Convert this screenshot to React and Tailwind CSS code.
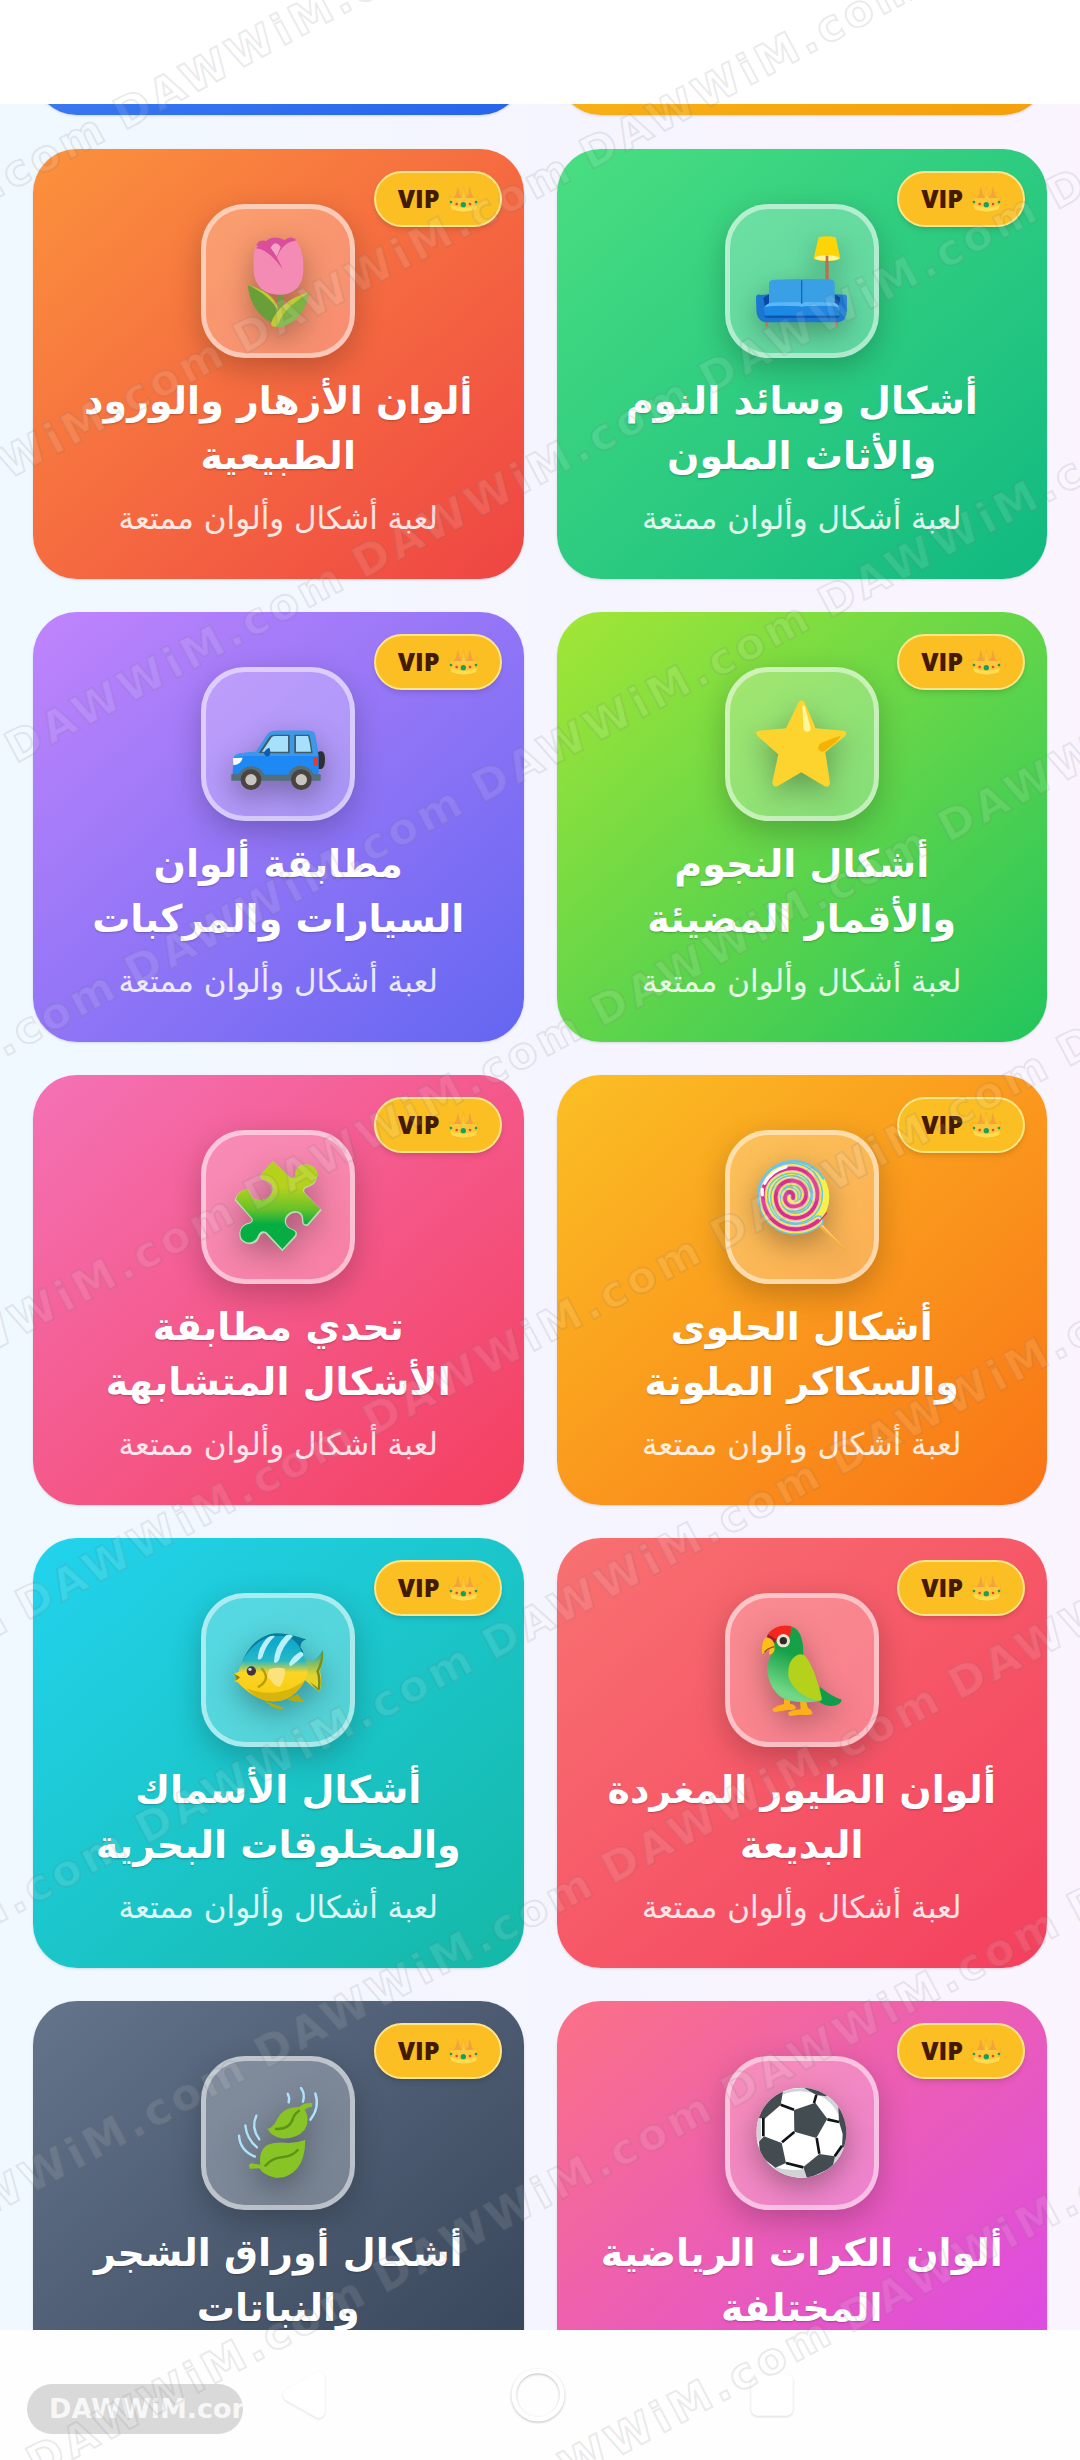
import React from 'react';
import { Circle, Square, Triangle } from 'lucide-react';

const Tulip = () => (
  <svg viewBox="159 165 270 270" className="size-[90px] overflow-visible" aria-hidden="true">
    <path d="M294 340 H312 L310 400 H296 Z" fill="#689f38" />
    <path d="M203 312 C250 325 292 350 294 395 L286 430 C232 408 210 365 203 312 Z" fill="#689f38" />
    <path d="M203 312 C250 325 292 350 294 388 C270 350 240 328 203 312 Z" fill="#c0ca33" />
    <path d="M387 334 C382 378 350 436 290 440 C284 432 296 400 310 385 C330 365 360 342 387 334 Z" fill="#7cb342" />
    <path d="M387 334 C345 345 290 375 273 428 C276 440 290 440 293 433 C310 385 345 365 387 334 Z" fill="#c0ca33" />
    <path d="M228 215 C224 185 240 174 258 180 C275 165 298 168 314 178 C330 164 348 168 347 190 C350 215 300 240 290 240 C260 240 232 235 228 215 Z" fill="#d94f9b" />
    <path d="M272 200 Q287 175 302 198 L290 228 Z" fill="#f6a3c8" />
    <path d="M227 195 C250 192 274 206 290 232 C300 200 325 180 346 178 C360 190 372 225 370 260 C372 310 345 342 297 341 C245 341 218 305 221 255 C220 225 223 205 227 195 Z" fill="#f48bb5" />
    <path d="M240 187 C265 190 285 210 308 265 C290 240 262 205 228 202 Z" fill="#d94f9b" />
    <path d="M346 172 C320 180 300 200 289 229 C300 200 315 182 346 180 Z" fill="#d94f9b" />
  </svg>
);

const Couch = () => (
  <svg viewBox="111 165 270 270" className="size-[90px] overflow-visible" aria-hidden="true">
    <path d="M316 228 H326 V300 H316 Z" fill="#b8704f" />
    <path d="M296 169 Q321 162 347 169 L361 232 Q356 240 321 240 Q286 240 281 232 Z" fill="#fdd406" />
    <ellipse cx="321" cy="231" rx="36" ry="8" fill="#fff59d" />
    <path d="M317 224 H325 V242 H317 Z" fill="#b8704f" />
    <path d="M134 418 H148 L142 437 H137 Z M341 418 H355 L351 437 H346 Z" fill="#c0745a" />
    <path d="M108 348 Q110 338 122 342 L147 340 V380 L134 402 H358 L344 380 V340 L370 341 Q381 338 381 352 V385 Q380 422 355 424 H135 Q109 420 109 385 Z" fill="#1976d2" />
    <path d="M130 350 L147 340 V370 L135 378 Z M361 350 L344 340 V370 L356 378 Z" fill="#0d47a1" />
    <path d="M147 306 Q150 295 165 296 L238 294 Q245 296 252 294 L330 295 Q343 296 344 308 V380 H147 Z" fill="#39a0e5" />
    <path d="M243 298 H247 V370 H243 Z" fill="#1565c0" />
    <path d="M131 380 Q142 362 170 364 L240 363 L246 370 L252 363 L330 364 Q352 362 359 380 L354 403 H136 Z" fill="#1e88e5" />
    <path d="M134 378 Q145 362 170 364 L240 363 L246 370 L252 363 L330 364 Q350 364 357 378 Q330 372 250 376 L246 378 L240 376 Q170 372 134 378 Z" fill="#5cb8f5" />
    <path d="M132 404 H358 Q356 411 346 411 H145 Q134 411 132 404 Z" fill="#0d57b0" />
  </svg>
);

const Car = () => (
  <svg viewBox="159 174 270 270" className="size-[90px] overflow-visible" aria-hidden="true">
    <path d="M412 338 Q414 330 424 331 Q435 332 435 355 Q435 382 424 384 H412 Z" fill="#2f2f33" />
    <path d="M160 352 Q164 337 190 336 L228 332 L262 281 Q270 269 290 269 H385 Q403 269 405 280 L416 345 V402 H158 Z" fill="#1e88f5" />
    <path d="M228 332 L262 281 Q270 269 290 269 H385 Q403 269 405 280 L414 345 H190 Q170 345 162 350 Q166 337 190 336 Z" fill="#3c98e8" />
    <path d="M236 336 L268 288 Q273 281 284 281 H329 V337 Z" fill="#455a64" />
    <path d="M343 281 H388 Q393 300 398 337 H343 Z" fill="#455a64" />
    <path d="M246 332 L275 289 Q279 285 286 285 H324 V332 Z M348 285 H384 Q390 305 393 332 H348 Z" fill="#a6e0fa" />
    <path d="M252 338 Q254 324 268 320 Q274 334 268 345 Q258 350 252 338 Z" fill="#1259b0" />
    <path d="M159 351 L188 350 Q184 370 160 373 Z" fill="#fafafa" />
    <path d="M400 348 H414 V374 H400 Z" fill="#e53935" />
    <path d="M154 400 L176 398 Q190 376 214 376 Q244 378 253 401 H325 Q334 374 364 374 Q392 376 401 400 H422 V419 H154 Z" fill="#546e7a" />
    <circle cx="213" cy="416" r="31" fill="#4a4340" />
    <circle cx="213" cy="416" r="17" fill="#c9c5c2" />
    <circle cx="364" cy="416" r="31" fill="#4a4340" />
    <circle cx="364" cy="416" r="17" fill="#c9c5c2" />
  </svg>
);

const Star = () => (
  <svg viewBox="111 174 270 270" className="size-[90px] overflow-visible" aria-hidden="true">
    <path d="M236 184 Q245 172 254 184 L287 262 L371 269 Q386 273 375 285 L316 334 L330 425 Q328 441 314 436 L244 394 L172 436 Q158 440 157 424 L175 340 L112 284 Q102 272 117 269 L198 262 Z" fill="#fdd42e" />
    <path d="M247 194 Q252 190 256 200 L272 262 Q272 273 260 272 Q250 271 250 258 Z" fill="#fff79a" />
    <path d="M362 284 Q360 296 312 331 Q300 335 295 324 Q292 312 305 305 Q345 288 362 284 Z" fill="#f6b107" />
  </svg>
);

const Puzzle = () => (
  <svg viewBox="159 156 270 270" className="size-[90px] overflow-visible" aria-hidden="true">
    <defs>
      <linearGradient id="puzzle" x1="0" y1="0" x2="0" y2="1">
        <stop offset="0.3" stopColor="#b5d11c" />
        <stop offset="0.55" stopColor="#67c12a" />
        <stop offset="0.72" stopColor="#05ad43" />
      </linearGradient>
    </defs>
    <path d="M279 154 L331 203 C343 208 347 198 347 188 C348 166 375 157 396 168 C420 182 417 216 392 228 C380 233 367 237 375 249 L425 301 L384 347 C374 350 365 344 366 331 C366 307 345 303 329 315 C311 329 317 350 335 356 C351 361 355 371 347 382 L307 424 L257 371 C246 366 241 374 237 385 C227 409 193 407 181 388 C172 365 184 342 207 338 C215 336 218 330 212 324 L164 271 C170 252 187 234 204 239 C212 244 211 259 223 266 C240 276 268 268 277 246 C284 225 269 214 252 209 C240 207 239 198 246 190 Z" fill="#b9dcb4" />
    <path d="M279 154 L331 203 C343 208 347 198 347 188 C348 166 375 157 396 168 C418 180 417 212 392 224 C380 229 363 234 371 247 L421 297 L382 342 C374 345 369 340 370 329 C370 302 345 297 327 309 C307 323 311 350 333 358 C348 363 349 371 343 378 L307 417 L260 367 C247 360 238 366 233 379 C223 403 195 402 184 384 C176 363 187 345 208 341 C218 338 222 330 216 324 L168 268 C172 252 187 234 204 239 C212 244 211 259 223 266 C240 276 268 268 277 246 C284 225 269 214 252 209 C240 207 239 198 246 190 Z" fill="url(#puzzle)" />
  </svg>
);

const swirl = 'M219 264 C224 250 208 239 199 252 C188 270 202 291 225 289 C254 287 267 256 252 232 C236 207 199 205 179 228 C158 253 166 296 194 315 C230 337 276 318 289 277 C300 239 282 196 247 181 C202 163 148 188 132 230 C120 272 138 322 176 344 C212 366 262 360 294 333';

const Lollipop = () => (
  <svg viewBox="111 156 270 270" className="size-[90px] overflow-visible" aria-hidden="true">
    <path d="M288 342 L298 334 L378 420 Q376 426 370 422 Z" fill="#f3ab3c" />
    <path d="M294 338 L298 334 L378 420 Z" fill="#ffd07c" />
    <circle cx="220" cy="260" r="108" fill="#f7f04c" />
    <g fill="none" strokeLinecap="round">
      <path d={swirl} stroke="#6cc5e6" strokeWidth="34" />
      <path d={swirl} stroke="#f7f04c" strokeWidth="25" />
      <path d={swirl} stroke="#fbb2c4" strokeWidth="17" />
      <path d="M219 264 C224 250 208 239 199 252" stroke="#6cc5e6" strokeWidth="12" />
      <path d={swirl} stroke="#d92f8a" strokeWidth="11" />
      <path d="M118 285 A106 106 0 0 1 225 154 A106 106 0 0 1 310 205" stroke="#6cc5e6" strokeWidth="8" />
      <path d="M134 220 Q153 183 198 171 M127 237 V255" stroke="#ffffff" strokeWidth="9" />
      <path d="M300 332 L320 309" stroke="#d92f8a" strokeWidth="4" />
    </g>
  </svg>
);

const Fish = () => (
  <svg viewBox="159 165 270 270" className="size-[90px] overflow-visible" aria-hidden="true">
    <defs>
      <linearGradient id="fish" x1="0" y1="0" x2="0" y2="1">
        <stop offset="0.1" stopColor="#10a9cc" />
        <stop offset="0.38" stopColor="#25b8c6" />
        <stop offset="0.56" stopColor="#fbd524" />
        <stop offset="1" stopColor="#f6c90e" />
      </linearGradient>
      <linearGradient id="tail" x1="0" y1="0" x2="0" y2="1">
        <stop offset="0" stopColor="#12a3ad" />
        <stop offset="0.6" stopColor="#e4d32d" />
      </linearGradient>
    </defs>
    <path d="M248 388 Q275 402 314 414 Q300 422 275 410 Z M322 388 L352 372 Q362 388 375 395 Q350 400 322 388 Z" fill="#b5aa10" />
    <path d="M185 285 C198 235 240 192 290 190 C330 190 355 203 379 208 Q362 213 361 232 Q375 245 368 262 Z" fill="#087c9b" />
    <path d="M362 258 L392 277 Q415 265 428 240 Q434 268 420 302 Q428 335 419 365 Q395 350 372 328 Z" fill="url(#tail)" />
    <path d="M427 242 Q434 268 417 304 Q426 335 418 364 Q402 352 390 336 Q410 350 413 355 Q417 325 409 304 Q423 275 427 242 Z" fill="#7e8d13" />
    <path d="M176 305 C190 250 232 208 275 200 C315 193 345 202 360 235 C372 262 386 282 382 312 C370 355 330 392 285 394 C235 395 195 360 172 336 L162 334 Q172 326 168 320 L159 313 Z" fill="url(#fish)" />
    <path d="M200 355 C255 378 320 372 373 332 C350 375 320 394 280 394 C245 394 218 378 200 355 Z" fill="#d8b50d" />
    <path d="M262 203 Q272 196 285 198 Q257 225 247 262 Q240 272 233 267 Q235 230 262 203 Z M318 196 Q330 192 339 198 Q305 230 297 270 Q288 284 282 276 Q283 230 318 196 Z M360 246 Q372 246 370 256 Q350 278 333 288 Q326 290 328 280 Q335 260 360 246 Z" fill="#b9f0fa" />
    <path d="M246 296 Q274 328 236 350" fill="none" stroke="#b59c08" strokeWidth="7" strokeLinecap="round" />
    <path d="M268 298 Q290 290 314 296 Q318 322 300 350 Q286 350 278 338 L262 318 Z" fill="#fbe27c" />
    <path d="M159 310 Q174 318 180 322 Q176 328 163 334 Q172 325 168 320 Z" fill="#8b7a12" />
    <circle cx="214" cy="303" r="14" fill="#45343c" />
    <circle cx="210" cy="298" r="5" fill="#d7d7e0" />
  </svg>
);

const Parrot = () => (
  <svg viewBox="111 165 270 270" className="size-[90px] overflow-visible" aria-hidden="true">
    <defs>
      <linearGradient id="parrot" x1="0.7" y1="0" x2="0.4" y2="1">
        <stop offset="0.4" stopColor="#16a148" />
        <stop offset="0.9" stopColor="#72d885" />
      </linearGradient>
    </defs>
    <path d="M300 350 Q335 380 366 389 Q360 408 330 408 Q310 406 294 392 Z" fill="#0f9d4c" />
    <path d="M192 388 H210 V402 Q224 402 228 414 Q224 422 208 419 L166 426 Q156 424 158 416 Q172 405 192 402 Z M240 394 H258 L264 414 Q278 420 277 432 Q272 436 240 434 L210 438 Q202 434 206 426 Q222 418 242 418 Z" fill="#fbb117" />
    <path d="M160 182 Q205 155 232 180 Q253 205 249 255 L304 392 Q250 402 200 390 Q150 370 141 300 Q142 270 160 245 Z" fill="url(#parrot)" />
    <path d="M232 255 Q245 250 256 258 Q285 295 306 388 Q300 396 275 388 Q220 365 205 320 Q202 270 232 255 Z" fill="#b4d11c" />
    <path d="M145 190 Q170 160 214 168 L210 205 Q190 195 166 214 Z" fill="#f4261d" />
    <path d="M144 191 L168 208 L166 220 L140 203 Z" fill="#a11a35" />
    <path d="M126 252 Q124 210 139 202 Q162 205 164 230 Q165 252 148 254 Q146 244 150 238 Z" fill="#fdbf17" />
    <path d="M134 247 Q140 236 163 230" fill="none" stroke="#8a4a22" strokeWidth="4" />
    <circle cx="190" cy="212" r="20" fill="#eee6d2" />
    <circle cx="190" cy="212" r="11" fill="#2f2a26" />
  </svg>
);

const Leaves = () => (
  <svg viewBox="159 147 270 270" className="size-[90px] overflow-visible" aria-hidden="true">
    <g fill="none" stroke="#afe3fa" strokeWidth="7" strokeLinecap="round">
      <path d="M323 164 Q330 176 326 190 M363 147 Q376 165 369 188 M406 163 Q420 205 391 242" />
      <path d="M229 230 Q212 265 238 301 M196 259 Q200 300 231 325 M177 290 Q180 335 225 353" />
    </g>
    <path d="M262 270 Q280 266 292 240 Q310 203 358 204 Q372 190 397 192 L396 204 Q382 203 374 212 Q392 240 374 272 Q350 300 305 298 Q278 295 262 270 Z" fill="#88c425" />
    <path d="M208 376 L214 373 L241 377 Q235 340 258 320 Q285 307 325 312 Q352 312 376 303 Q375 360 352 388 Q325 420 286 416 Q252 410 238 388 L210 389 Q205 382 208 376 Z" fill="#88c425" />
    <path d="M288 270 Q330 272 340 235 Q346 222 357 215 M256 380 Q275 357 310 354 Q340 350 353 333" fill="none" stroke="#5b9416" strokeWidth="7" strokeLinecap="round" />
  </svg>
);

const SoccerBall = () => (
  <svg viewBox="111 147 270 270" className="size-[90px] overflow-visible" aria-hidden="true">
    <defs>
      <clipPath id="ball">
        <circle cx="244" cy="281" r="135" />
      </clipPath>
    </defs>
    <g clipPath="url(#ball)">
      <rect x="109" y="146" width="271" height="271" fill="#ffffff" />
      <path d="M109 232 L122 236 L124 300 L112 312 Z M160 382 Q200 398 254 390 L266 418 H180 Z M345 350 Q372 325 376 300 L380 340 L340 380 Z M300 150 Q350 180 366 225 L355 225 Q330 180 290 165 Z M185 160 Q215 145 260 148 L282 163 Q230 148 185 168 Z" fill="#d1d3d5" />
      <g fill="#434c50">
        <path d="M222 213 L286 191 L322 239 L289 297 L223 278 Z" />
        <path d="M105 235 L130 150 L190 150 L182 198 L134 239 Z" />
        <path d="M254 140 L330 160 L318 172 L289 168 L254 148 Z" />
        <path d="M355 205 L390 220 V340 L366 322 L368 285 L357 248 Z" />
        <path d="M117 308 L132 292 L185 312 L198 372 L166 386 L120 350 Z" />
        <path d="M250 384 L298 345 L345 352 L338 385 L262 420 Z" />
      </g>
      <path d="M182 197 L222 212 M289 168 L282 192 M322 241 L357 249 M290 297 L298 344 M223 279 L186 310 M130 236 V292 M198 372 L250 385 M366 320 L344 352" fill="none" stroke="#111416" strokeWidth="8" />
    </g>
  </svg>
);

const Crown = () => (
  <svg viewBox="795 12 90 90" className="size-[30px]" aria-hidden="true">
    <path d="M798 48 Q808 58 818 52 L824 22 L836 52 L841 18 L848 52 L860 22 L866 52 Q876 58 885 48 L874 88 Q842 104 808 88 Z" fill="#fdc739" stroke="#f3b02a" strokeWidth="2" />
    <path d="M824 20 L830 42 L836 54 H812 L820 42 Z M860 20 L866 42 L872 54 H848 L856 42 Z" fill="#f3a23c" />
    <path d="M802 74 Q842 94 882 74 L878 88 Q842 102 806 88 Z" fill="#ffdc4e" />
    <g fill="#16a05d">
      <circle cx="804" cy="66" r="4" />
      <circle cx="841" cy="74" r="8" />
      <circle cx="879" cy="66" r="4" />
    </g>
    <circle cx="821" cy="72" r="4" fill="#df4a32" />
    <circle cx="861" cy="72" r="4" fill="#df4a32" />
  </svg>
);

const games = [
  { title: 'أشكال وسائد النوم والأثاث الملون', icon: Couch, colors: 'from-[#4ade80] to-[#10b981]' },
  { title: 'ألوان الأزهار والورود الطبيعية', icon: Tulip, colors: 'from-[#fb923c] to-[#ef4444]' },
  { title: 'أشكال النجوم والأقمار المضيئة', icon: Star, colors: 'from-[#a3e635] to-[#22c55e]' },
  { title: 'مطابقة ألوان السيارات والمركبات', icon: Car, colors: 'from-[#c084fc] to-[#6366f1]' },
  { title: 'أشكال الحلوى والسكاكر الملونة', icon: Lollipop, colors: 'from-[#fbbf24] to-[#f97316]' },
  { title: 'تحدي مطابقة الأشكال المتشابهة', icon: Puzzle, colors: 'from-[#f472b6] to-[#f43f5e]' },
  { title: 'ألوان الطيور المغردة البديعة', icon: Parrot, colors: 'from-[#f87171] to-[#f43f5e]' },
  { title: 'أشكال الأسماك والمخلوقات البحرية', icon: Fish, colors: 'from-[#22d3ee] to-[#14b8a6]' },
  { title: 'ألوان الكرات الرياضية المختلفة', icon: SoccerBall, colors: 'from-[#fb7185] to-[#d946ef]' },
  { title: 'أشكال أوراق الشجر والنباتات', icon: Leaves, colors: 'from-[#64748b] to-[#334155]' },
];

const GameCard = ({ title, icon: Icon, colors }) => (
  <a
    href="#game"
    className={`relative flex flex-col items-center rounded-[44px] bg-linear-to-br/srgb px-10 pt-[55px] pb-[39px] text-center text-white shadow-sm ${colors}`}
  >
    <span className="absolute top-[22px] right-[22px] flex h-14 items-center gap-2 rounded-full border-2 border-[#fde68a] bg-[#fbbf24] px-[22px] shadow-md">
      <Crown />
      <span className="font-['Open_Sans'] text-[25px] font-extrabold text-[#451a03]">VIP</span>
    </span>
    <span className="flex size-[154px] items-center justify-center rounded-[44px] border-[5px] border-white/50 bg-white/25 shadow-[0_10px_30px_rgba(0,0,0,0.22)]">
      <span className="drop-shadow-[0_10px_14px_rgba(0,0,0,0.3)]">
        <Icon />
      </span>
    </span>
    <h3 className="mt-4 text-[38px] leading-[55px] font-bold text-shadow-sm">{title}</h3>
    <p className="mt-3 text-[31px] leading-[44px] text-white/85">لعبة أشكال وألوان ممتعة</p>
  </a>
);

const Watermark = () => (
  <div className="pointer-events-none absolute inset-0 overflow-hidden" dir="ltr" aria-hidden="true">
    <div className="absolute top-[519px] left-[-1450px] w-max origin-top-left rotate-[-28deg]">
      {Array.from({ length: 12 }, (_, row) => (
        <div key={row} className="flex h-[254px] items-center">
          {Array.from({ length: 8 }, (_, col) => (
            <span
              key={col}
              className="w-[393px] text-[43px] font-bold tracking-widest whitespace-nowrap text-white/10 [-webkit-text-stroke:2px_rgba(100,100,100,0.14)]"
            >
              DAWWiM.com
            </span>
          ))}
        </div>
      ))}
    </div>
  </div>
);

const App = () => (
  <div
    dir="rtl"
    className="relative flex h-screen flex-col overflow-hidden bg-white font-['DejaVu_Sans',sans-serif]"
  >
    <header className="h-[104px] shrink-0 bg-white" />

    <main className="min-h-0 flex-1 overflow-hidden bg-linear-to-r from-[#f0f9ff] via-[#f5f5ff] to-[#fbf4ff]">
      {/* Tail of the featured row that is scrolled out of view */}
      <div className="grid grid-cols-2 grid-rows-[11px] items-end gap-x-[33px] px-[33px]">
        <div className="h-24 rounded-[44px] bg-linear-to-br/srgb from-[#fbbf24] to-[#f59e0b] shadow-sm" />
        <div className="h-24 rounded-[44px] bg-linear-to-br/srgb from-[#4b8bf5] to-[#2563eb] shadow-sm" />
      </div>

      <div className="mt-[34px] grid grid-cols-2 gap-[33px] px-[33px]">
        {games.map((game) => (
          <GameCard key={game.title} {...game} />
        ))}
      </div>
    </main>

    <nav dir="ltr" className="flex h-[130px] shrink-0 items-center bg-[#fefefe]">
      <div className="mt-7 ml-[27px] w-[216px] overflow-hidden rounded-full bg-[#d9d9d9] pl-[22px] text-[27px] leading-[50px] font-bold text-[#f7f7f7]">
        DAWWiM.com
      </div>
      <div className="flex flex-1 items-center gap-[180px] pl-9 text-white">
        <button type="button" aria-label="Back" className="drop-shadow-[0_1px_1px_rgba(0,0,0,0.12)]">
          <Triangle className="size-[50px] -rotate-90" fill="white" />
        </button>
        <button type="button" aria-label="Home" className="drop-shadow-[0_1px_1px_rgba(0,0,0,0.25)]">
          <Circle className="size-[58px]" />
        </button>
        <button type="button" aria-label="Recent apps" className="drop-shadow-[0_1px_1px_rgba(0,0,0,0.15)]">
          <Square className="size-[50px]" fill="white" />
        </button>
      </div>
    </nav>

    <Watermark />
  </div>
);

export default App;
